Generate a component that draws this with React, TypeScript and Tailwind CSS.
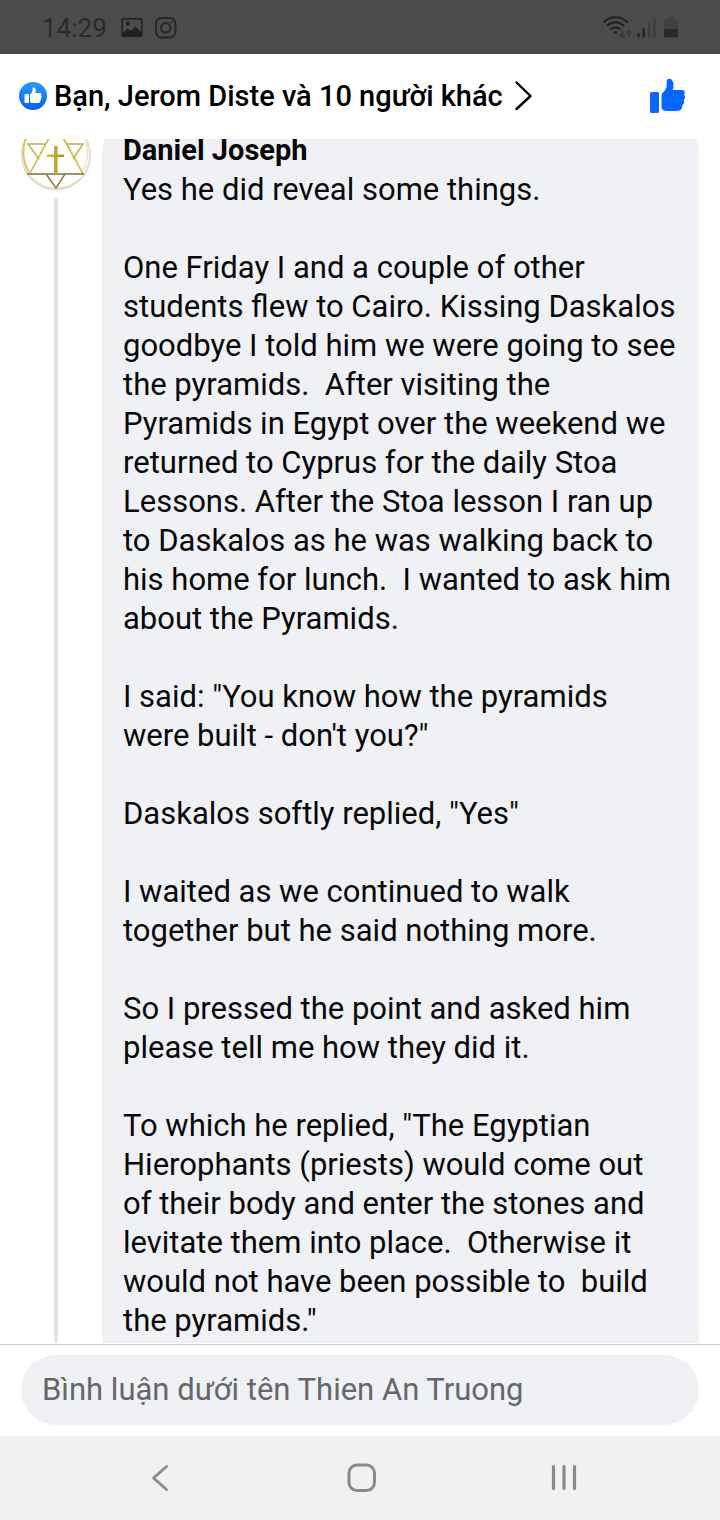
const PARAGRAPHS = [
  "Yes he did reveal some things.",
  "One Friday I and a couple of other students flew to Cairo. Kissing Daskalos goodbye I told him we were going to see the pyramids.  After visiting the Pyramids in Egypt over the weekend we returned to Cyprus for the daily Stoa Lessons. After the Stoa lesson I ran up to Daskalos as he was walking back to his home for lunch.  I wanted to ask him about the Pyramids.",
  "I said: \"You know how the pyramids were built - don't you?\"",
  "Daskalos softly replied, \"Yes\"",
  "I waited as we continued to walk together but he said nothing more.",
  "So I pressed the point and asked him please tell me how they did it.",
  "To which he replied, \"The Egyptian Hierophants (priests) would come out of their body and enter the stones and levitate them into place.  Otherwise it would not have been possible to  build the pyramids.\"",
];

function StatusBar() {
  return (
    <div className="flex h-[54px] items-center justify-between bg-[#4b4b4b] pt-px pl-[42px] pr-[41px] text-[#2a2a2a]">
      <div className="flex items-center gap-3">
        <span className="pr-0.5 text-[26px] leading-8">14:29</span>
        <svg width="22" height="22" viewBox="0 0 22 22" aria-hidden="true">
          <path
            fill="#1f1f1f"
            fillRule="evenodd"
            d="M2 1h18a1.500 1.500 0 0 1 1.500 1.500v16a1.500 1.500 0 0 1-1.500 1.500H2A1.500 1.500 0 0 1 .5 18.500v-16A1.500 1.500 0 0 1 2 1Zm0 1.500v13.200l4.500-4.200 3 2.500 5-4.500 5.500 5.500V2.500ZM7 4.500a2 2 0 1 1 0 4 2 2 0 0 1 0-4Z"
          />
        </svg>
        <svg width="22" height="22" viewBox="0 0 22 22" fill="none" stroke="#262626" strokeWidth="2" aria-hidden="true">
          <rect x="1" y="1" width="19.500" height="19.500" rx="5.500" />
          <circle cx="10.800" cy="10.800" r="4.800" />
          <circle cx="16.500" cy="5.500" r="1.100" fill="#262626" stroke="none" />
        </svg>
      </div>
      <svg width="77" height="26" viewBox="0 0 77 26" fill="none" aria-hidden="true">
        <g stroke="#222" strokeWidth="2.200">
          <path d="M1.500 7.500C8 .5 19 .5 25.500 7.500" />
          <path d="M5 11C9.500 6.200 17.500 6.200 22 11" />
          <path d="M8.500 14.500C11 11.600 16 11.600 18.500 14.500" />
        </g>
        <circle cx="13.500" cy="17.500" r="1.700" fill="#222" />
        <path d="M20.500 16v6M18 19.500l2.500 2.500 2.500-2.500M27 21.500v-6M24.500 18l2.500-2.500 2.500 2.500" stroke="#373737" strokeWidth="1.700" />
        <path fill="#222" d="M35.500 18h2v4.500h-2zM40.500 13.500H43v9h-2.500z" />
        <path fill="#3b3b3b" d="M46 8h2v14.500h-2zM51.500 3h2v19.500h-2z" />
        <path fill="#404040" d="M66 2h6v2.500h4V14H62V4.500h4z" />
        <path fill="#292929" d="M62 14h14v8.500H62z" />
      </svg>
    </div>
  );
}

function ReactionBadge() {
  return (
    <svg width="28" height="28" viewBox="0 0 28 28" className="shrink-0" aria-hidden="true">
      <defs>
        <linearGradient id="badge" x1="0" y1="0" x2="0" y2="1">
          <stop offset="0" stopColor="#2b9df7" />
          <stop offset="1" stopColor="#0a5cf5" />
        </linearGradient>
      </defs>
      <circle cx="14" cy="14" r="14" fill="url(#badge)" />
      <rect x="5.500" y="12" width="4.500" height="9" rx="1" fill="#fff" />
      <path
        fill="#fff"
        d="M11 13.200c0-1 1.700-2.200 2.300-3.700.4-1 .1-3 .6-3.700.9-1 3 0 3 2.500 0 1.200-.5 2.200-.5 2.700h4.400c1.700 0 2.200 1.600 1.200 2.600.9.800.8 2-.2 2.600.6.900.3 1.900-.6 2.300.3 1.400-.4 2.500-1.700 2.500H14c-1.300 0-3-.4-3-1.500Z"
      />
    </svg>
  );
}

function Header() {
  return (
    <header className="flex h-[85px] shrink-0 items-center justify-between pb-0.5 pl-[19px] pr-[34px]">
      <button type="button" className="flex items-center text-[29px] leading-8 font-medium text-black">
        <ReactionBadge />
        <span className="pl-[7px]">Bạn, Jerom Diste và 10 người khác</span>
        <svg width="18" height="32" viewBox="0 0 18 32" className="ml-3" fill="none" stroke="#000" strokeWidth="2.400" strokeLinecap="round" strokeLinejoin="round" aria-hidden="true">
          <path d="M1.500 2.500l14 13.500-14 13" />
        </svg>
      </button>
      <button type="button" aria-label="Thích">
        <svg width="36" height="36" viewBox="0 0 36 36" fill="#0866ff" aria-hidden="true">
          <rect x="0" y="14" width="9" height="21" rx="1.500" />
          <path d="M11.500 17.500c0-2.500 4-4.500 5-8.500.4-1.800 0-5 .3-6.500C17.200.5 20.500.3 22 2c1.800 2.200 2 6.500.8 10h9.200c2.200 0 3.200 1.800 2.500 3.800-.2.700-.1 1.200.1 1.800.6 1.300.6 2.600-.2 3.700-.4.600-.5 1-.4 1.700.3 1.500-.1 2.800-1.200 3.700-.4.400-.5.800-.6 1.400-.3 3.300-1.600 4.900-5 4.900H17.500c-3.500 0-6-1.200-6-3.500Z" />
        </svg>
      </button>
    </header>
  );
}

function Avatar() {
  return (
    <svg width="70" height="72" viewBox="0 0 70 72" className="shrink-0" fill="none" role="img" aria-label="Daniel Joseph">
      <defs>
        <linearGradient id="gold" x1="0" y1="0" x2="1" y2="0">
          <stop offset="0" stopColor="#dcb83a" />
          <stop offset="1" stopColor="#b08c3a" />
        </linearGradient>
      </defs>
      <circle cx="35" cy="36.500" r="34" fill="#fffffb" stroke="#dedede" strokeWidth="2" />
      <path d="M8 53C2 43 1 30 5 18" stroke="#e0c65c" strokeWidth="2" />
      <path d="M10 58c7 7 14 11 24 11s19-3 25-9" stroke="#ebe0ac" strokeWidth="1.400" />
      <path d="M64 20c4 12 3 24-4 35" stroke="#f0e8c8" strokeWidth="1.800" />
      <path d="M35 6 9 54M35 6l27 49" stroke="#c9b25a" strokeWidth="1.500" />
      <path d="M37.500 7 61 51M33.500 11 11 52" stroke="#f0e4a0" strokeWidth="1" />
      <path d="M6 55h57" stroke="#7d6f35" strokeWidth="1.500" />
      <path d="M24 25H7l11 15M46 25h16L52 40" stroke="#c0a95a" strokeWidth="1.400" />
      <path d="m25 55 10 14 9-14" stroke="#8d7b3c" strokeWidth="1.500" />
      <path fill="url(#gold)" d="M33 27h3.500v8.500H43V38h-6.500v17H33V38h-7v-2.500h7z" />
    </svg>
  );
}

function Comment() {
  return (
    <article className="-mt-5 flex items-stretch pl-[21px] pr-[21px]">
      <div className="flex w-[70px] shrink-0 flex-col items-center">
        <Avatar />
        <div className="mt-[7px] w-1 flex-1 rounded-t-full bg-[#e4e5eb]" />
      </div>
      <div className="ml-[11px] flex-1 rounded-t-[34px] bg-[#f0f1f5] pt-3 pr-5 pb-[3px] pl-[21px] text-[31px] leading-[39px] text-[#080809]">
        <h2 className="text-[29px] font-bold">Daniel Joseph</h2>
        <div className="space-y-[39px] whitespace-pre-wrap">
          {PARAGRAPHS.map((text) => (
            <p key={text}>{text}</p>
          ))}
        </div>
      </div>
    </article>
  );
}

function Composer() {
  return (
    <form className="mt-px border-t border-[#c9cbcf] px-[21px] pt-[10px] pb-[11px]">
      <input
        type="text"
        aria-label="Bình luận dưới tên Thien An Truong"
        placeholder="Bình luận dưới tên Thien An Truong"
        className="h-[70px] w-full rounded-full bg-[#f0f1f5] px-[21px] pb-0.5 text-[31px] text-black outline-none placeholder:text-[#65676b]"
      />
    </form>
  );
}

function NavBar() {
  return (
    <nav className="flex h-[84px] shrink-0 items-center justify-center gap-[172px] bg-[#f1f1f1] pl-[3px]">
      <button type="button" aria-label="Back">
        <svg width="30" height="30" viewBox="0 0 30 30" fill="none" stroke="#8a8a8a" strokeWidth="2.800" strokeLinecap="round" strokeLinejoin="round">
          <path d="M21.500 3.500 8.500 15l13 11.500" />
        </svg>
      </button>
      <button type="button" aria-label="Home">
        <svg width="30" height="30" viewBox="0 0 30 30" fill="none" stroke="#8a8a8a" strokeWidth="3">
          <rect x="2" y="2" width="25.500" height="25.500" rx="8" />
        </svg>
      </button>
      <button type="button" aria-label="Recent apps">
        <svg width="30" height="30" viewBox="0 0 30 30" stroke="#8a8a8a" strokeWidth="3.200" strokeLinecap="round">
          <path d="M4.500 3.500v22M15 3.500v22M25.500 3.500v22" />
        </svg>
      </button>
    </nav>
  );
}

export default function App() {
  return (
    <div className="flex min-h-screen flex-col bg-white font-['Roboto',sans-serif]">
      <StatusBar />
      <Header />
      <main className="flex-1 overflow-hidden">
        <Comment />
      </main>
      <Composer />
      <NavBar />
    </div>
  );
}
